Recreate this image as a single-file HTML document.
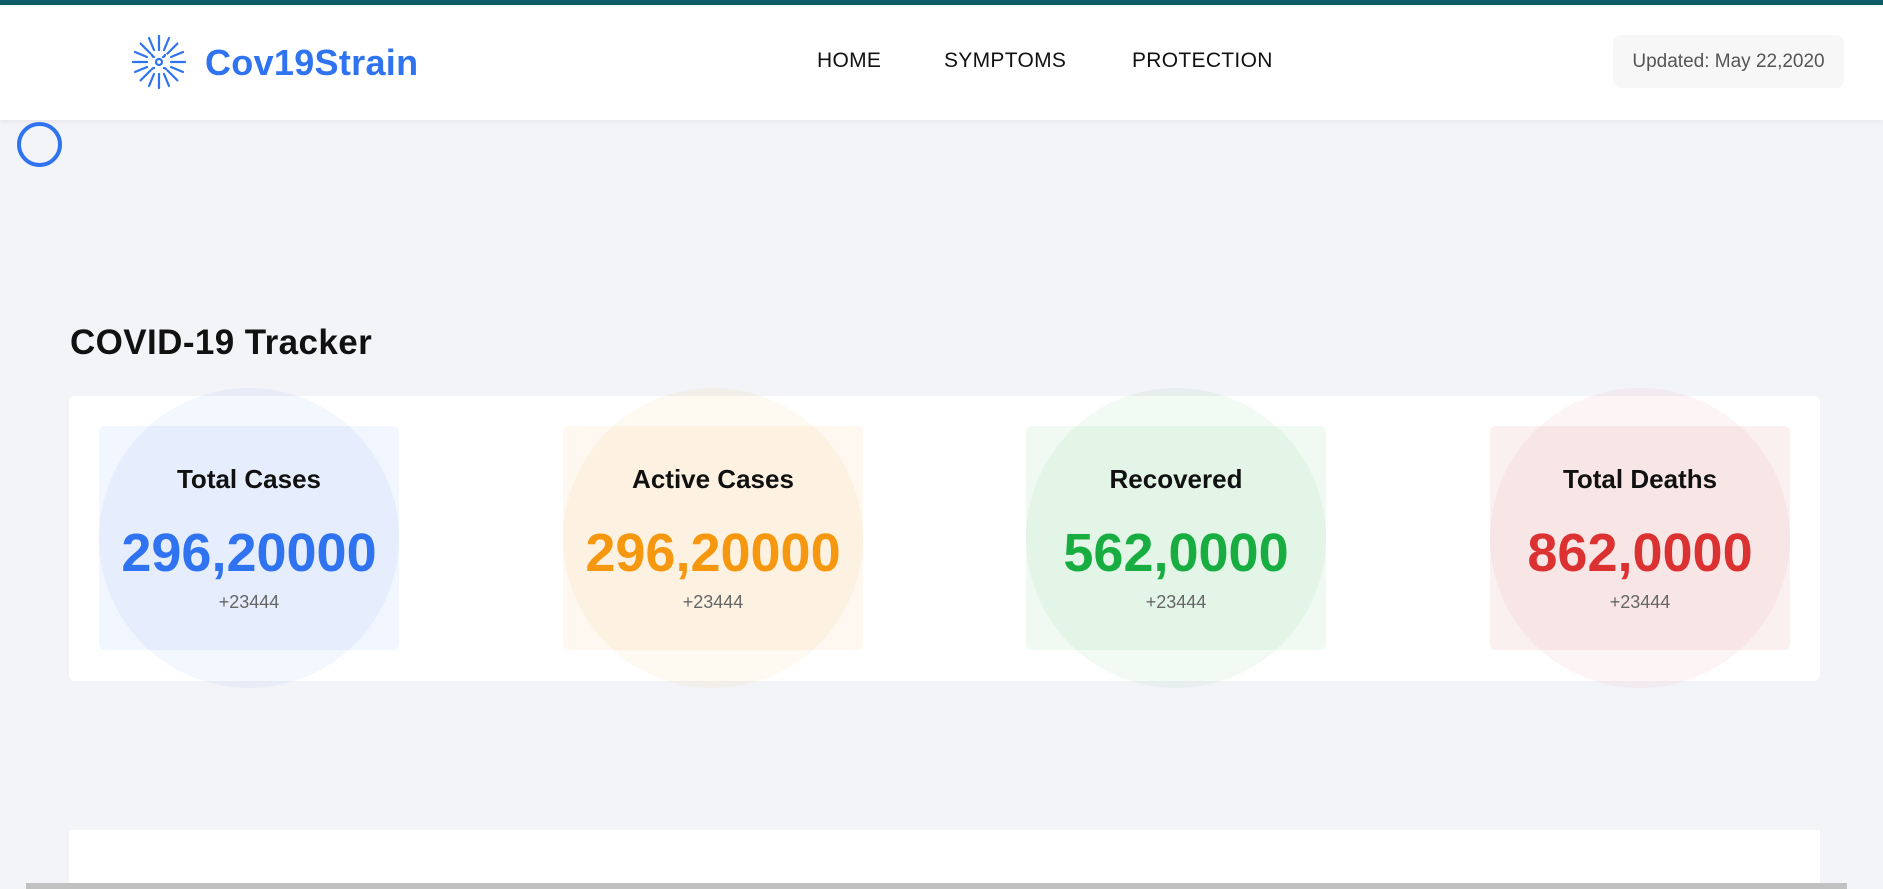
<!DOCTYPE html>
<html><head><style>
*{margin:0;padding:0;box-sizing:border-box}
body{width:1883px;height:889px;overflow:hidden;background:#f3f4f8;font-family:"Liberation Sans",sans-serif;position:relative}
.top{position:absolute;top:0;left:0;right:0;height:5px;background:#0d5e66}
.hdr{position:absolute;top:5px;left:0;right:0;height:115px;background:#fff;box-shadow:0 2px 6px rgba(0,0,0,.06)}
.logo{position:absolute;left:205px;top:37px;font-size:36px;font-weight:bold;color:#2f73f0;letter-spacing:.3px}
.nav{position:absolute;top:44px;font-size:21px;color:#111;letter-spacing:.3px}
.upd{position:absolute;left:1613px;top:30px;width:231px;height:53px;background:#f7f7f7;border-radius:8px;font-size:19px;color:#555;text-align:center;line-height:53px}
.ring{position:absolute;left:17px;top:122px;width:45px;height:45px;border:4px solid #2f73f0;border-radius:50%}
h2{position:absolute;left:70px;top:323px;font-size:35px;font-weight:bold;color:#111;letter-spacing:.4px}
.panel{position:absolute;left:69px;top:396px;width:1751px;height:285px;background:#fff;border-radius:6px}
.box{position:absolute;top:426px;width:300px;height:224px;border-radius:6px;text-align:center}
.circ{position:absolute;top:388px;width:300px;height:300px;border-radius:50%}
.t{position:absolute;left:0;right:0;top:38px;font-size:26px;font-weight:bold;color:#111}
.n{position:absolute;left:0;right:0;top:96px;font-size:54px;font-weight:bold}
.s{position:absolute;left:0;right:0;top:166px;font-size:18px;color:#666}
.bot{position:absolute;left:69px;top:830px;width:1751px;height:59px;background:#fff}
.sb{position:absolute;left:26px;top:883px;width:1821px;height:6px;background:#c1c1c1}
</style></head><body>
<div class="top"></div>
<div class="hdr">
<svg style="position:absolute;left:130px;top:28px" width="58" height="58" viewBox="0 0 58 58" fill="none" stroke="#2f73f0" stroke-width="2.2" stroke-linecap="round">
<circle cx="29" cy="29" r="3"/>
<g>
<path d="M29 3v14M29 41v14M3 29h14M41 29h14M10.6 10.6l10 10M37.4 37.4l10 10M47.4 10.6l-10 10M20.6 37.4l-10 10"/>
<path d="M19 5l5 12M39 5l-5 12M19 53l5-12M39 53l-5-12M5 19l12 5M5 39l12-5M53 19l-12 5M53 39l-12-5"/>
</g>
<path d="M22 22a3 3 0 0 0 2 2M35 22a3 3 0 0 1-2 2M24 35a3 3 0 0 0-2 1M34 35a3 3 0 0 1 2 1"/>
</svg>
<div class="logo">Cov19Strain</div>
<div class="nav" style="left:817px">HOME</div>
<div class="nav" style="left:944px">SYMPTOMS</div>
<div class="nav" style="left:1132px">PROTECTION</div>
<div class="upd">Updated: May 22,2020</div>
</div>
<div class="ring"></div>
<h2>COVID-19 Tracker</h2>
<div class="panel"></div>

<div class="box" style="left:99px;background:#f2f6fe"></div>
<div class="circ" style="left:99px;background:rgba(47,115,240,.06)"></div>
<div class="box" style="left:99px"><div class="t">Total Cases</div><div class="n" style="color:#2f73f0">296,20000</div><div class="s">+23444</div></div>

<div class="box" style="left:563px;background:#fef8f0"></div>
<div class="circ" style="left:563px;background:rgba(245,150,20,.06)"></div>
<div class="box" style="left:563px"><div class="t">Active Cases</div><div class="n" style="color:#f5980f">296,20000</div><div class="s">+23444</div></div>

<div class="box" style="left:1026px;background:#f0faf2"></div>
<div class="circ" style="left:1026px;background:rgba(30,170,70,.06)"></div>
<div class="box" style="left:1026px"><div class="t">Recovered</div><div class="n" style="color:#17ad40">562,0000</div><div class="s">+23444</div></div>

<div class="box" style="left:1490px;background:#faf0f0"></div>
<div class="circ" style="left:1490px;background:rgba(210,50,50,.05)"></div>
<div class="box" style="left:1490px"><div class="t">Total Deaths</div><div class="n" style="color:#dc3131">862,0000</div><div class="s">+23444</div></div>

<div class="bot"></div>
<div class="sb"></div>
</body></html>
